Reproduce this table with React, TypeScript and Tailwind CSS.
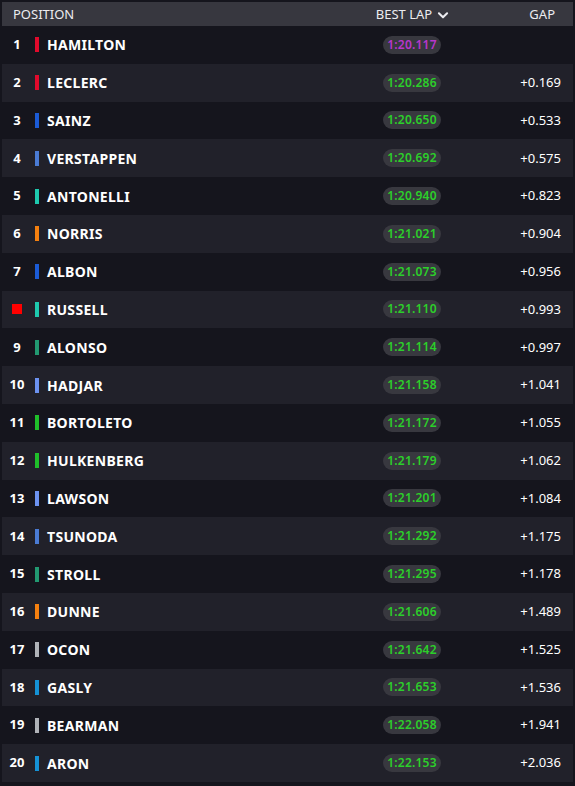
import React from 'react'

interface Driver {
  pos: number
  name: string
  team: string
  lap: string
  gap: string
  flag?: boolean
}

const drivers: Driver[] = [
  { pos: 1, name: 'HAMILTON', team: '#e10a2c', lap: '1:20.117', gap: '' },
  { pos: 2, name: 'LECLERC', team: '#e10a2c', lap: '1:20.286', gap: '+0.169' },
  { pos: 3, name: 'SAINZ', team: '#1b5bd6', lap: '1:20.650', gap: '+0.533' },
  { pos: 4, name: 'VERSTAPPEN', team: '#4a7bd4', lap: '1:20.692', gap: '+0.575' },
  { pos: 5, name: 'ANTONELLI', team: '#1ec9ae', lap: '1:20.940', gap: '+0.823' },
  { pos: 6, name: 'NORRIS', team: '#f5800f', lap: '1:21.021', gap: '+0.904' },
  { pos: 7, name: 'ALBON', team: '#1b5bd6', lap: '1:21.073', gap: '+0.956' },
  { pos: 8, name: 'RUSSELL', team: '#1ec9ae', lap: '1:21.110', gap: '+0.993', flag: true },
  { pos: 9, name: 'ALONSO', team: '#229971', lap: '1:21.114', gap: '+0.997' },
  { pos: 10, name: 'HADJAR', team: '#6c92f0', lap: '1:21.158', gap: '+1.041' },
  { pos: 11, name: 'BORTOLETO', team: '#1fbf2a', lap: '1:21.172', gap: '+1.055' },
  { pos: 12, name: 'HULKENBERG', team: '#1fbf2a', lap: '1:21.179', gap: '+1.062' },
  { pos: 13, name: 'LAWSON', team: '#6c92f0', lap: '1:21.201', gap: '+1.084' },
  { pos: 14, name: 'TSUNODA', team: '#4a7bd4', lap: '1:21.292', gap: '+1.175' },
  { pos: 15, name: 'STROLL', team: '#229971', lap: '1:21.295', gap: '+1.178' },
  { pos: 16, name: 'DUNNE', team: '#f5800f', lap: '1:21.606', gap: '+1.489' },
  { pos: 17, name: 'OCON', team: '#b0b3b8', lap: '1:21.642', gap: '+1.525' },
  { pos: 18, name: 'GASLY', team: '#1592d6', lap: '1:21.653', gap: '+1.536' },
  { pos: 19, name: 'BEARMAN', team: '#b0b3b8', lap: '1:22.058', gap: '+1.941' },
  { pos: 20, name: 'ARON', team: '#1592d6', lap: '1:22.153', gap: '+2.036' },
]

function Row({ d }: { d: Driver }) {
  const even = d.pos % 2 === 0
  return (
    <div className={`flex items-center h-[37.8px] ${even ? 'bg-[#21212a]' : 'bg-[#15151d]'}`}>
      <div className="w-[30px] flex justify-center">
        {d.flag ? (
          <span className="block w-[10px] h-[10px] bg-[#ff0000]" />
        ) : (
          <span className="text-[13px] font-bold text-white">{d.pos}</span>
        )}
      </div>
      <span className="ml-[3px] block w-[4px] h-[15px]" style={{ backgroundColor: d.team }} />
      <span className="ml-[8px] text-[14px] font-bold text-white tracking-[0.3px]">{d.name}</span>
      <div className="flex-1" />
      <div className="w-[120px] flex justify-center pr-[2px]">
        <span
          className={`rounded-full bg-[#38383f] px-[4px] h-[18px] leading-[18px] text-[12px] font-semibold tracking-[0.2px] ${
            d.pos === 1 ? 'text-[#b936cc]' : 'text-[#2ccf2a]'
          }`}
        >
          {d.lap}
        </span>
      </div>
      <div className="w-[100px] pr-[12px] text-right text-[13px] text-white">{d.gap}</div>
    </div>
  )
}

export default function App() {
  return (
    <div
      className="w-[575px] h-[786px] bg-[#15151d] pt-[2px] px-[2px] overflow-hidden"
      style={{ fontFamily: '"Noto Sans", "Open Sans", sans-serif' }}
    >
      <div className="flex items-center h-[24px] bg-[#37373f] text-[13px] text-[#ececf0]">
        <span className="ml-[11px] mt-[1px]">POSITION</span>
        <div className="flex-1" />
        <div className="w-[120px] flex items-center justify-center mt-[1px]">
          <span>BEST LAP</span>
          <svg width="14" height="14" viewBox="0 0 24 24" className="ml-[4px]" fill="none" stroke="#ececf0" strokeWidth="3.5" strokeLinecap="round" strokeLinejoin="round">
            <path d="M5 9l7 7 7-7" />
          </svg>
        </div>
        <div className="w-[100px] pr-[18px] text-right mt-[1px]">GAP</div>
      </div>
      {drivers.map((d) => (
        <Row key={d.pos} d={d} />
      ))}
    </div>
  )
}
